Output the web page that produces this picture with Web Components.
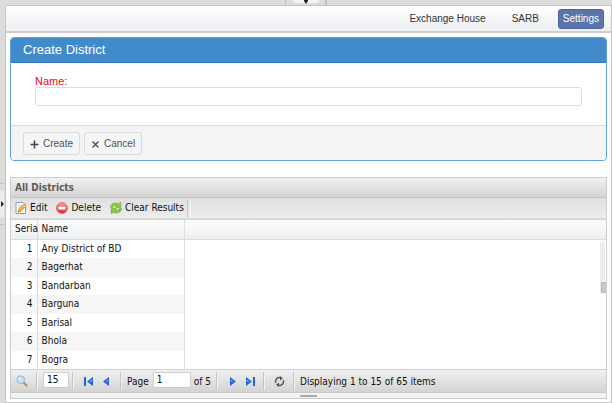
<!DOCTYPE html>
<html lang="en">
<head>
<meta charset="utf-8">
<title>Create District</title>
<style>
html,body{margin:0;height:100%}
body{background:#dcdcdc;font-family:"Liberation Sans",Arial,sans-serif;font-size:12px;color:#444}
</style>
</head>
<body>
<app-shell>
  <nav-bar slot="nav">
    <nav-item>Exchange House</nav-item>
    <nav-item>SARB</nav-item>
    <nav-item active>Settings</nav-item>
  </nav-bar>
  <form-panel heading="Create District">
    <text-field label="Name:"></text-field>
    <form-button slot="actions" icon="plus">Create</form-button>
    <form-button slot="actions" icon="cross">Cancel</form-button>
  </form-panel>
  <data-grid heading="All Districts">
    <tool-button slot="tools" icon="edit">Edit</tool-button>
    <tool-button slot="tools" icon="delete">Delete</tool-button>
    <tool-button slot="tools" icon="clear">Clear Results</tool-button>
    <grid-table></grid-table>
    <grid-pager slot="pager"></grid-pager>
  </data-grid>
</app-shell>
<script>
const define = (name, html, setup) => {
  const template = document.createElement('template');
  template.innerHTML = '<style>*{box-sizing:border-box}</style>' + html;
  customElements.define(name, class extends HTMLElement {
    constructor() {
      super();
      this.attachShadow({mode: 'open'}).append(template.content.cloneNode(true));
    }
    connectedCallback() { if (setup) setup(this, this.shadowRoot); }
  });
};
const icons = {
  plus: '<svg width="11" height="11" viewBox="0 0 11 11"><path d="M5.500 1.500v8M1.500 5.500h8" stroke="#3d4654" stroke-width="1.600"/></svg>',
  cross: '<svg width="11" height="11" viewBox="0 0 11 11"><path d="M2.500 2.500l6 6M8.500 2.500l-6 6" stroke="#3d4654" stroke-width="1.200"/></svg>',
  edit: '<svg width="12" height="12" viewBox="0 0 12 12"><path d="M1 .5h7L10.500 3v8.500H1z" fill="#fff" stroke="#8a98a8"/><path d="M3 3h4M3 5h3" stroke="#c3ccd6"/><path d="M3 10l.8-3L9 1.800 11.200 4 6 9.200z" fill="#f4b433" stroke="#c47f18" stroke-width=".6"/><path d="M8 2.800L10.200 5" stroke="#fff0b5"/><path d="M3 10l.3-1.200 1 .9z" fill="#333"/></svg>',
  delete: '<svg width="12" height="12" viewBox="0 0 12 12"><defs><linearGradient id="r" x2="0" y2="1"><stop stop-color="#f6a09a"/><stop offset="1" stop-color="#d82e28"/></linearGradient></defs><circle cx="6" cy="6" r="5.500" fill="url(#r)" stroke="#d4605a" stroke-width=".7"/><rect x="2.500" y="4.700" width="7" height="2.800" rx=".6" fill="#fff"/></svg>',
  clear: '<svg width="12" height="12" viewBox="0 0 12 12"><g fill="#8ccb3b" stroke="#5fa41e" stroke-width=".6" stroke-linejoin="round"><path d="M.4 5.400C.8 1.900 4.600-.2 8.300 1.700L10.800.4v5H5.400l1.300-1.600C5 3.200 3.300 4 2.800 5.400z"/><path d="M11.600 6.600c-.4 3.500-4.200 5.600-7.900 3.700l-2.500 1.300v-5h5.400L5.300 8.200c1.700.7 3.400-.1 3.900-1.600z"/></g></svg>'
};

define('app-shell', `
<style>
:host{display:grid;grid-template:5px minmax(0,1fr)/5px minmax(0,1fr);min-height:100vh;background:#dcdcdc}
.top{grid-column:1/3;display:flex;justify-content:center}
.top .tab{width:42px;border:solid #bdbdbd;border-width:0 2px 0 1px;display:flex;justify-content:center}
.top button{all:unset;width:26px;height:3px;background:#f4f4f4;border-radius:0 0 5px 5px;display:flex;justify-content:center}
.side{display:flex;flex-direction:column;justify-content:center}
.side .tab{height:42px;border:solid #c4c4c4;border-width:1px 0;display:flex;align-items:center}
.side button{all:unset;width:4px;height:28px;background:#eee;border-radius:0 4px 4px 0;display:flex;align-items:center;justify-content:center}
svg{display:block}
main{background:#fff;border:1px solid #c6c6c6;display:flex;flex-direction:column;min-width:0}
.content{padding:4px 4px 3px;display:flex;flex-direction:column;gap:16px;flex:1}
</style>
<div class="top"><div class="tab"><button aria-label="Collapse top"><svg width="6" height="4" viewBox="0 0 6 4"><path d="M1 0h4v1L3 4 1 1z" fill="#222"/></svg></button></div></div>
<div class="side"><div class="tab"><button aria-label="Expand side"><svg width="4" height="6" viewBox="0 0 4 6"><path d="M1 0l3 3-3 3z" fill="#222"/></svg></button></div></div>
<main><slot name="nav"></slot><div class="content"><slot></slot></div></main>`);

define('nav-bar', `
<style>:host{display:block}
nav{display:flex;justify-content:flex-end;align-items:center;gap:12px;height:27px;padding:0 7px 0 0;background:linear-gradient(#fff,#eceef1);border-bottom:2px solid #cfcfd3}
</style><nav><slot></slot></nav>`);

define('nav-item', `
<style>:host{display:block}
a{display:block;padding:0 6px;line-height:18px;font-size:10px;color:#333;text-decoration:none;border:1px solid transparent;border-radius:3px}
:host([active]) a{padding:0 4px;background:#5b74ab;border-color:#4e659c;color:#fff}
</style><a href="#"><slot></slot></a>`);

define('form-panel', `
<style>:host{display:block}
section{border:1px solid #62a2da;border-radius:4px;background:#fff;overflow:hidden}
h2{margin:0;padding:0 12px;font-size:13px;font-weight:400;line-height:24px;color:#fff;background:#428bca;border-bottom:1px solid #357ebd}
.body{padding:13px 24px 19px}
footer{display:flex;gap:4px;padding:6px 12px 5px;background:#f4f4f4;border-top:1px solid #ddd}
</style>
<section><h2></h2><div class="body"><slot></slot></div><footer><slot name="actions"></slot></footer></section>`,
(host, root) => { root.querySelector('h2').textContent = host.getAttribute('heading'); });

define('text-field', `
<style>:host{display:block}
label{display:block;font-size:11px;line-height:11px;color:#f00}
input{display:block;width:100%;height:19px;padding:0 4px;font:inherit;border:1px solid #ddd;border-radius:3px;background:#fff}
</style><label for="field"></label><input id="field" type="text">`,
(host, root) => { root.querySelector('label').textContent = host.getAttribute('label'); });

define('form-button', `
<style>:host{display:block}
button{display:flex;align-items:center;gap:3px;height:23px;padding:0 6px 0 5px;font:10px "Liberation Sans",Arial,sans-serif;color:#4a505c;background:#f5f5f5;border:1px solid #d9d9d9;border-radius:3px}
svg{display:block;margin-top:2px}.icon{display:block}
</style><button type="button"><span class="icon"></span><slot></slot></button>`,
(host, root) => { root.querySelector('.icon').innerHTML = icons[host.getAttribute('icon')]; });

define('data-grid', `
<style>:host{display:block;flex:1;font-family:"DejaVu Sans Condensed","Noto Sans",sans-serif;font-size:10px;color:#111}
section{display:flex;flex-direction:column;height:100%;border:1px solid #ccc;background:#fff}
h3{margin:0;padding:0 4px;font-size:10px;line-height:19px;color:#5c5c5c;background:linear-gradient(#f2f2f2,#d3d3d3);border-bottom:1px solid #c6c6c6}
.tools{display:flex;align-items:center;gap:9px;height:22px;padding:0 4px;background:linear-gradient(#e0e0e0,#ededed);border-bottom:2px solid #d8d8d8}
.tools::after{content:"";width:2px;height:17px;margin-left:-6px;border-left:1px solid #c9c9c9;border-right:1px solid #f6f6f6}
.view{flex:1}
</style>
<section><h3></h3><div class="tools"><slot name="tools"></slot></div><div class="view"><slot></slot></div><slot name="pager"></slot></section>`,
(host, root) => { root.querySelector('h3').textContent = host.getAttribute('heading'); });

define('tool-button', `
<style>:host{display:block}
button{all:unset;display:flex;align-items:center;gap:3px;line-height:18px}
svg{display:block}
</style><button type="button"><span class="icon"></span><slot></slot></button>`,
(host, root) => { root.querySelector('.icon').innerHTML = icons[host.getAttribute('icon')]; });

define('grid-table', `
<style>:host{display:block}
.view{display:grid;grid-template-columns:174px 1fr}
table{border-collapse:collapse;table-layout:fixed;width:174px}
.serial{width:26px}
th{height:19px;padding:0 4px;text-align:left;font-weight:400;line-height:18px;white-space:nowrap;background:linear-gradient(#f9f9f9 35%,#eceff2)}
th:first-child{padding-right:0}
thead tr{border-bottom:1px solid #ddd}
th,td{border-right:1px solid #ddd}
td{height:18px;padding:0 4px;line-height:18px}
td:first-child{text-align:right}
tbody tr:nth-child(even){background:#f6f6f6}
tbody tr:nth-child(even) td{height:19px}
.rest{display:flex;flex-direction:column;align-items:flex-end}
.head{width:100%;height:20px;background:linear-gradient(#f9f9f9 35%,#eceff2);border-bottom:1px solid #ddd}
.track{width:6px;height:51px;margin-top:2px;background:linear-gradient(90deg,#ececec 80%,#fff 80%);border-radius:2px;display:flex;align-items:flex-end;justify-content:flex-end}
.thumb{width:5px;height:11px;background:#cbcbc5;border:1px solid #b9b9b2;border-right:0}
</style>
<div class="view"><table><colgroup><col class="serial"><col></colgroup><thead><tr><th scope="col">Seria</th><th scope="col">Name</th></tr></thead><tbody></tbody></table>
<div class="rest"><div class="head"></div><div class="track"><div class="thumb"></div></div></div></div>`,
(host, root) => {
  root.querySelector('tbody').innerHTML = ['Any District of BD','Bagerhat','Bandarban','Barguna','Barisal','Bhola','Bogra']
    .map((name, i) => `<tr><td>${i + 1}</td><td>${name}</td></tr>`).join('');
});

define('grid-pager', `
<style>:host{display:block}
.bar{display:flex;align-items:center;height:24px;padding:0 5px;background:linear-gradient(#f0f0f0,#d3d3d3);border-top:1px solid #d0d0d0;border-bottom:1px solid #c8c8c8;white-space:nowrap}
i{width:2px;height:18px;border-left:1px solid #c4c4c4;border-right:1px solid #f2f2f2}
button{all:unset;display:block}svg{display:block}
input{height:16px;padding:0 3px;font:inherit;color:#111;background:#fff;border:1px solid #ccc;margin-bottom:3px}
.size{width:26px;margin-left:5px;margin-right:3px}
label{display:flex;align-items:center;gap:4px}
.page{width:38px}
.first{margin:0 10px}
.prev{margin-right:11px}
.label{margin:0 3px 0 5px}
.next{margin:0 10px 0 12px}
.last{margin-right:8px}
.search{margin-right:8px}
.reload{margin:0 8px 0 9px}
.after{margin-left:5px}
.status{margin-left:5px}
.split{height:5px;background:#f3f3f3;display:flex;justify-content:center;align-items:center}
.split b{width:17px;height:2px;background:#aaa}
</style>
<div class="bar">
<button class="search" aria-label="Search"><svg width="12" height="12" viewBox="0 0 12 12"><path d="M7.500 7.500l3 3" stroke="#be8852" stroke-width="2" stroke-linecap="round"/><circle cx="4.700" cy="4.700" r="3.900" fill="#c5e0f5" stroke="#90b7d8"/><path d="M2.500 4.500a2.200 2.200 0 0 1 2.200-2" fill="none" stroke="#fff"/></svg></button>
<i></i><input class="size" aria-label="Rows per page" value="15"><i></i>
<button class="first" aria-label="First page"><svg width="9" height="9" viewBox="0 0 9 9"><path d="M0 0h2v9H0zM9 0v9L3 4.500z" fill="#2562d6"/><path d="M8 2.500v2.500L5.500 4.500z" fill="#82b0fa"/></svg></button>
<button class="prev" aria-label="Previous page"><svg width="6" height="9" viewBox="0 0 6 9"><path d="M6 0v9L0 4.500z" fill="#2562d6"/><path d="M5 2.500v2.500L2.500 4.500z" fill="#6da0f5"/></svg></button>
<i></i><span class="label"><label>Page<input class="page" value="1"></label></span><span>of 5</span>
<i class="after"></i>
<button class="next" aria-label="Next page"><svg width="6" height="9" viewBox="0 0 6 9"><path d="M0 0v9l6-4.500z" fill="#2562d6"/><path d="M1 2.500v2.500l2.500-.5z" fill="#82b0fa"/></svg></button>
<button class="last" aria-label="Last page"><svg width="9" height="9" viewBox="0 0 9 9"><path d="M7 0h2v9H7zM0 0v9l6-4.500z" fill="#2562d6"/><path d="M1 2.500v2.500l2.500-.5z" fill="#82b0fa"/></svg></button>
<i></i>
<button class="reload" aria-label="Reload"><svg width="11" height="11" viewBox="0 0 11 11"><path d="M1.800 6.800A3.800 3.800 0 0 1 6.800 1.900M9.200 4.200a3.800 3.800 0 0 1-5 4.900" fill="none" stroke="#555" stroke-width="1.500"/><path d="M6 0l3 2.300L6 4.400zM5 11L2 8.700l3-2.100z" fill="#555"/></svg></button>
<i></i><span class="status">Displaying 1 to 15 of 65 items</span>
</div>
<div class="split"><b></b></div>`);
</script>
</body>
</html>
